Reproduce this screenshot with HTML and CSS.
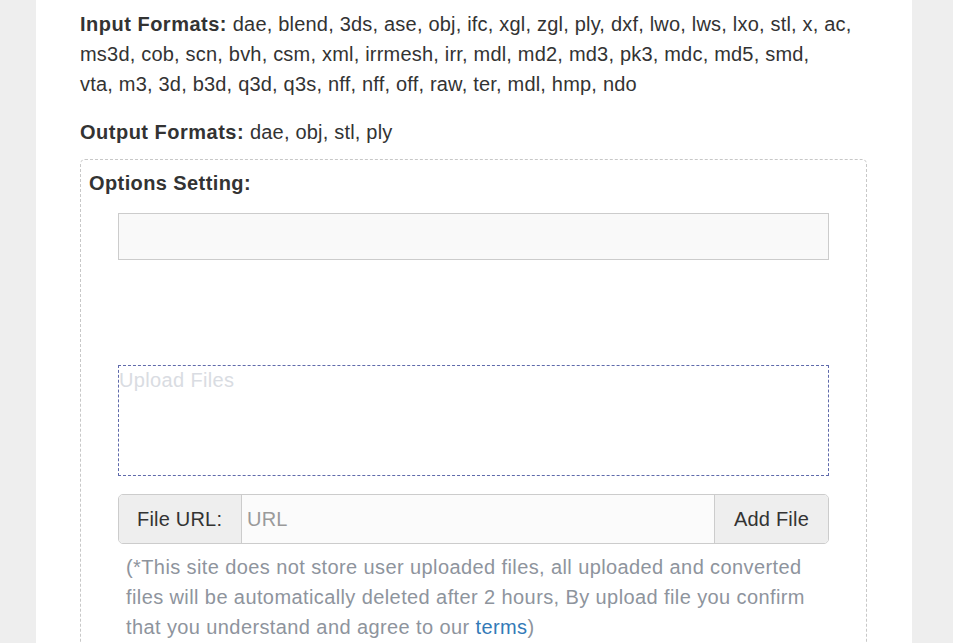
FILE: index.html
```html
<!DOCTYPE html>
<html>
<head>
<meta charset="utf-8">
<link rel="stylesheet" href="styles.css">
</head>
<body>
<div class="page">
  <p class="formats"><b>Input Formats:</b> dae, blend, 3ds, ase, obj, ifc, xgl, zgl, ply, dxf, lwo, lws, lxo, stl, x, ac,<br>ms3d, cob, scn, bvh, csm, xml, irrmesh, irr, mdl, md2, md3, pk3, mdc, md5, smd,<br>vta, m3, 3d, b3d, q3d, q3s, nff, nff, off, raw, ter, mdl, hmp, ndo</p>
  <p class="formats out"><b>Output Formats:</b> dae, obj, stl, ply</p>
  <div class="options">
    <div class="options-title">Options Setting:</div>
    <div class="inner">
      <div class="opt-field"></div>
      <div class="upload">Upload Files</div>
      <div class="url-group">
        <span class="addon">File URL:</span>
        <span class="url-input">URL</span>
        <span class="btn">Add File</span>
      </div>
      <p class="note">(*This site does not store user uploaded files, all uploaded and converted<br>files will be automatically deleted after 2 hours, By upload file you confirm<br>that you understand and agree to our <a href="#">terms</a>)</p>
    </div>
  </div>
</div>
</body>
</html>
```
FILE: styles.css
```css
html, body {
  margin: 0;
  padding: 0;
  background: #eeeeee;
  height: 100%;
  overflow: hidden;
}
.page {
  margin-left: 36px;
  width: 876px;
  box-sizing: border-box;
  padding: 9px 45px 0 44px;
  background: #ffffff;
  min-height: 643px;
  font-family: "Liberation Sans", Arial, sans-serif;
  font-size: 20px;
  letter-spacing: 0.2px;
  line-height: 30px;
  color: #333333;
}
.formats {
  margin: 0 0 18px;
  white-space: nowrap;
}
.formats b {
  letter-spacing: 0.5px;
}
.formats.out {
  margin-bottom: 12px;
}
.options {
  border: 1px dashed #c8c8c8;
  border-radius: 5px;
  padding: 8px 8px 0;
  min-height: 500px;
}
.options-title {
  font-weight: bold;
  letter-spacing: 0.4px;
  line-height: 30px;
}
.inner {
  margin: 15px 29px 0 29px;
}
.opt-field {
  height: 45px;
  border: 1px solid #cccccc;
  background: #f9f9f9;
}
.upload {
  margin-top: 105px;
  height: 109px;
  border: 1px dashed #5f6aab;
  color: #d9dce2;
  line-height: 28.5px;
  letter-spacing: 0.35px;
}
.url-group {
  margin-top: 18px;
  display: flex;
  height: 50px;
  border: 1px solid #cccccc;
  border-radius: 5px;
  box-sizing: border-box;
  overflow: hidden;
  line-height: 48px;
}
.addon {
  width: 123px;
  box-sizing: border-box;
  padding-left: 18px;
  background: #eeeeee;
  border-right: 1px solid #cccccc;
  color: #333333;
}
.url-input {
  flex: 1;
  padding-left: 5px;
  background: #fbfbfb;
  color: #9a9a9a;
}
.btn {
  width: 114px;
  box-sizing: border-box;
  border-left: 1px solid #cccccc;
  background: #eeeeee;
  text-align: center;
  color: #333333;
}
.note {
  margin: 8px 0 0;
  padding: 0 8px;
  color: #8e949d;
  line-height: 30px;
  letter-spacing: 0.4px;
  white-space: nowrap;
}
.note a {
  color: #337ab7;
  text-decoration: none;
}
```
